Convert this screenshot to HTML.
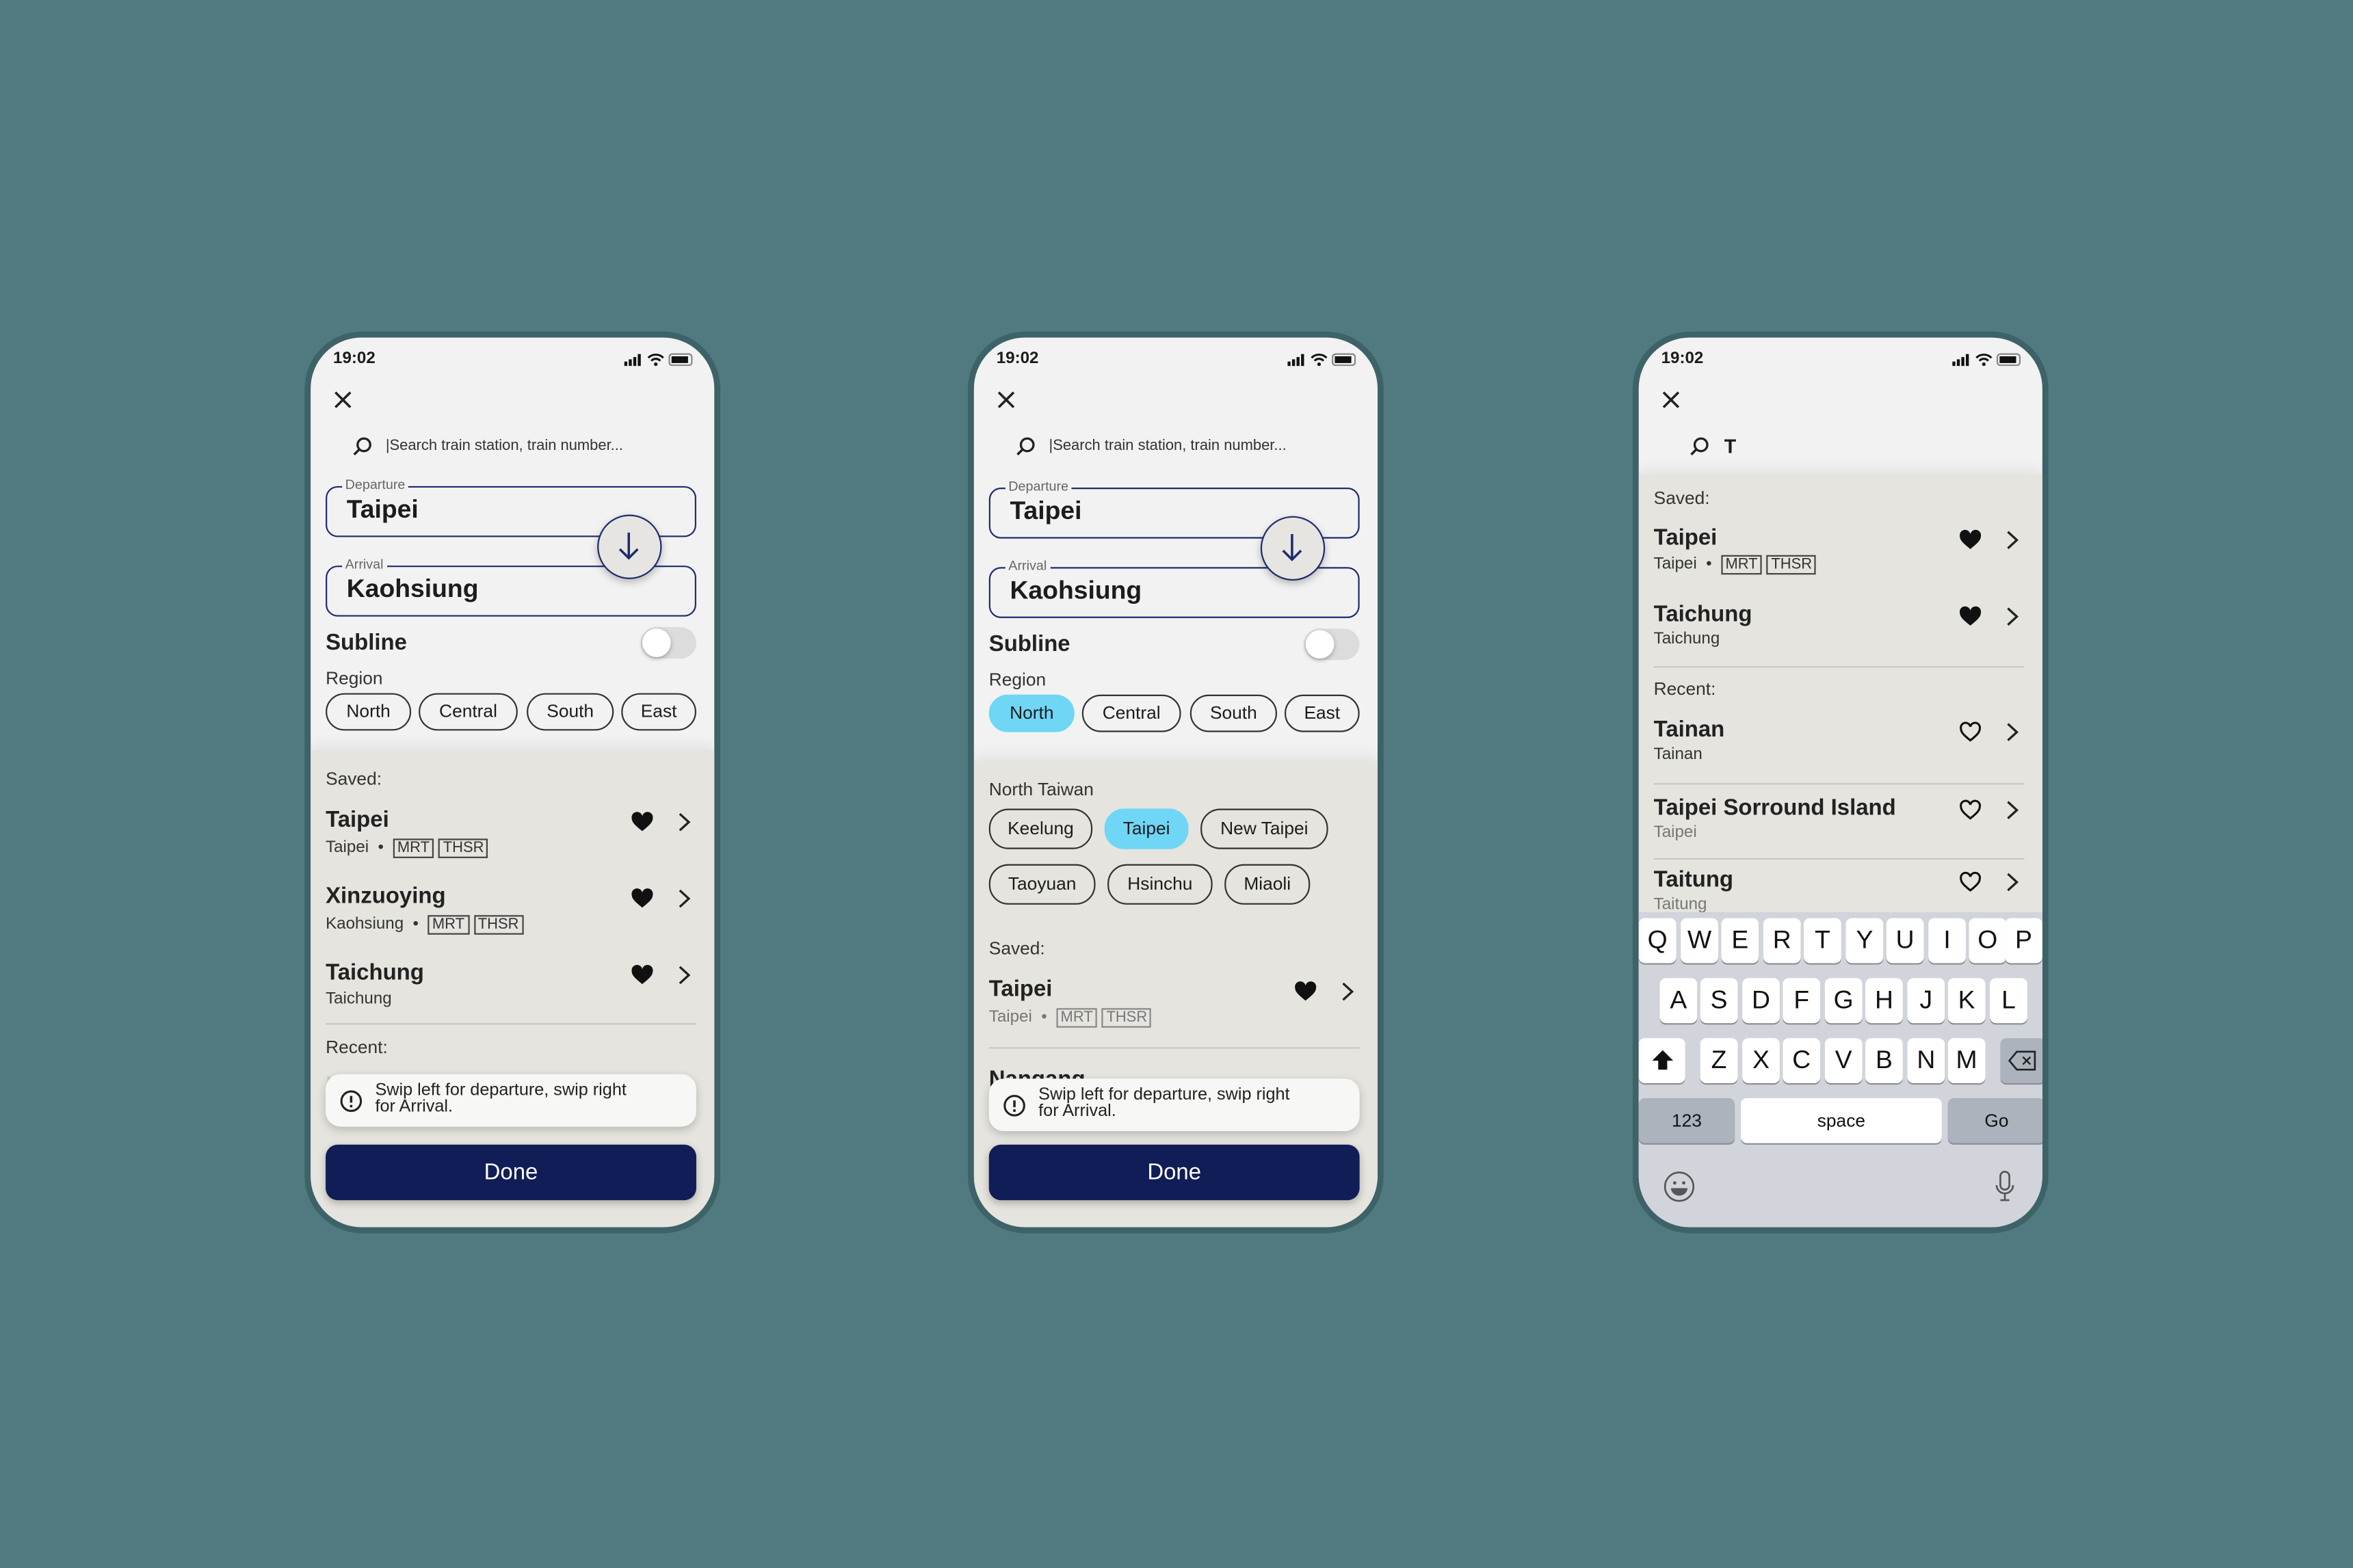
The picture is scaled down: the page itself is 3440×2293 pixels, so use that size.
<!DOCTYPE html>
<html><head><meta charset="utf-8">
<style>
*{box-sizing:border-box;margin:0;padding:0}
html,body{width:3440px;height:2292px;overflow:hidden;background:#507a7f}
#s{position:absolute;left:0;top:0;width:1568px;height:1045px;transform:scale(2.19388);transform-origin:0 0;font-family:"Liberation Sans",sans-serif;color:#1c1c1c}
.ph{position:absolute;width:277px;height:601px;border:4px solid #3d6267;border-radius:38px;background:#f2f2f2;overflow:hidden;top:221px}
.a{position:absolute}
.time{left:15px;top:8px;font-size:11px;font-weight:bold}
.stat{right:12px;top:10px}
.box{position:absolute;left:10px;width:247px;height:34px;border:1.5px solid #1e2c6e;border-radius:8px}
.lbl{position:absolute;left:10px;top:-7px;font-size:9px;color:#666;background:#f2f2f2;padding:0 2px;line-height:11px}
.big{position:absolute;left:13px;top:5px;font-size:17px;font-weight:bold}
.swap{position:absolute;left:191px;width:43px;height:43px;border-radius:50%;border:1.5px solid #1e2c6e;background:#e6e5e1;box-shadow:0 2px 5px rgba(0,0,0,.25)}
.chip{position:absolute;height:25px;border:1px solid #333;border-radius:13px;font-size:12px;line-height:23px;text-align:center}
.blue{background:#6fd6f6;border-color:#6fd6f6}
.sheet{position:absolute;left:0;right:0;bottom:0;background:#e5e4df;box-shadow:0 -4px 8px rgba(0,0,0,.06)}
.sm{font-size:12px;color:#333}
.nm{font-size:15px;font-weight:bold;color:#222}
.sub{font-size:11px;color:#333}
.sub.g{color:#777}
.tag{display:inline-block;border:1px solid #444;font-size:10px;line-height:11px;padding:0 2px;margin-left:3px}
.g .tag{border-color:#888}
.line{position:absolute;left:10px;width:247px;height:1px;background:#c9c8c3}
.toast{position:absolute;left:10px;width:247px;height:35px;background:#f7f7f5;border-radius:10px;box-shadow:0 2px 6px rgba(0,0,0,.2);font-size:11.5px;line-height:11px;padding:6px 0 0 59px;color:#222}
.toast svg{position:absolute;left:9px;top:10px}
.toast span{position:absolute;left:33px;top:6px}
.done{position:absolute;left:10px;width:247px;height:37px;background:#111d57;border-radius:8px;color:#fff;font-size:15px;text-align:center;line-height:37px;box-shadow:0 2px 5px rgba(0,0,0,.25)}
.kb{position:absolute;left:0;right:0;top:386px;bottom:0;background:#d1d4da}
.k{position:absolute;height:30px;width:25px;background:#fff;border-radius:4px;box-shadow:0 1px 0 #8a8d93;font-size:17px;text-align:center;line-height:30px;color:#111}
.kd{background:#adb3bc}
</style></head><body><div id="s">

<!-- PHONE 1 -->
<div class="ph" style="left:203px">
 <div class="a time">19:02</div>
 <svg class="a stat" width="48" height="9" viewBox="0 0 48 9"><rect x="0" y="6" width="2" height="3" fill="#111"/><rect x="3" y="4.5" width="2" height="4.5" fill="#111"/><rect x="6" y="3" width="2" height="6" fill="#111"/><rect x="9" y="1" width="2" height="8" fill="#111"/><path d="M16 3.5a7 7 0 0 1 10 0M18 5.5a4 4 0 0 1 6 0" stroke="#111" stroke-width="1.4" fill="none"/><circle cx="21" cy="7.8" r="1.2" fill="#111"/><rect x="30" y="1" width="15" height="7.5" rx="2" fill="none" stroke="#888"/><rect x="31.5" y="2.5" width="11" height="4.5" fill="#111"/></svg>
 <svg class="a" style="left:15px;top:35px" width="13" height="13"><path d="M1.5 1.5l10 10M11.5 1.5l-10 10" stroke="#222" stroke-width="1.6"/></svg>
 <svg class="a" style="left:28px;top:66px" width="13" height="13"><circle cx="7.5" cy="5.5" r="4.2" stroke="#222" stroke-width="1.5" fill="none"/><path d="M4.5 8.5L1 12" stroke="#222" stroke-width="1.6"/></svg>
 <div class="a" style="left:50px;top:67px;font-size:10px;color:#333">|Search train station, train number...</div>
 <div class="box" style="top:99px"><div class="lbl">Departure</div><div class="big">Taipei</div></div>
 <div class="box" style="top:152px"><div class="lbl">Arrival</div><div class="big">Kaohsiung</div></div>
 <div class="swap" style="top:118px"><svg width="40" height="40"><path d="M20 11v17M14 22l6 6 6-6" stroke="#1e2c6e" stroke-width="1.6" fill="none"/></svg></div>
 <div class="a nm" style="left:10px;top:195px">Subline</div>
 <div class="a" style="left:220px;top:193px;width:37px;height:21px;border-radius:11px;background:#dcdcdc"><div style="position:absolute;left:1px;top:1px;width:19px;height:19px;border-radius:50%;background:#fff;box-shadow:0 1px 3px rgba(0,0,0,.3)"></div></div>
 <div class="a sm" style="left:10px;top:220px">Region</div>
 <div class="chip" style="left:10px;top:237px;width:57px">North</div>
 <div class="chip" style="left:72px;top:237px;width:66px">Central</div>
 <div class="chip" style="left:144px;top:237px;width:58px">South</div>
 <div class="chip" style="left:207px;top:237px;width:50px">East</div>
 <div class="sheet" style="top:275px">
  <div class="a sm" style="left:10px;top:12px">Saved:</div>
  <div class="a nm" style="left:10px;top:38px">Taipei</div>
  <div class="a sub" style="left:10px;top:59px">Taipei &nbsp;• <span class="tag">MRT</span><span class="tag">THSR</span></div>
  <div class="a nm" style="left:10px;top:89px">Xinzuoying</div>
  <div class="a sub" style="left:10px;top:110px">Kaohsiung &nbsp;• <span class="tag">MRT</span><span class="tag">THSR</span></div>
  <div class="a nm" style="left:10px;top:140px">Taichung</div>
  <div class="a sub" style="left:10px;top:160px">Taichung</div>
  <svg class="a" style="left:213px;top:41px" width="16" height="14"><path d="M8 13C3 9 1 7 1 4.5A3.5 3.5 0 0 1 8 3a3.5 3.5 0 0 1 7 1.5C15 7 13 9 8 13z" fill="#111"/></svg>
  <svg class="a" style="left:213px;top:92px" width="16" height="14"><path d="M8 13C3 9 1 7 1 4.5A3.5 3.5 0 0 1 8 3a3.5 3.5 0 0 1 7 1.5C15 7 13 9 8 13z" fill="#111"/></svg>
  <svg class="a" style="left:213px;top:143px" width="16" height="14"><path d="M8 13C3 9 1 7 1 4.5A3.5 3.5 0 0 1 8 3a3.5 3.5 0 0 1 7 1.5C15 7 13 9 8 13z" fill="#111"/></svg>
  <svg class="a" style="left:244px;top:41px" width="10" height="14"><path d="M2 1.5l6 5.5-6 5.5" stroke="#222" stroke-width="1.5" fill="none"/></svg>
  <svg class="a" style="left:244px;top:92px" width="10" height="14"><path d="M2 1.5l6 5.5-6 5.5" stroke="#222" stroke-width="1.5" fill="none"/></svg>
  <svg class="a" style="left:244px;top:143px" width="10" height="14"><path d="M2 1.5l6 5.5-6 5.5" stroke="#222" stroke-width="1.5" fill="none"/></svg>
  <div class="line" style="top:182px"></div>
  <div class="a sm" style="left:10px;top:191px">Recent:</div>
  <div class="a nm" style="left:10px;top:215px;color:#ccc">Kaohsiung</div>
 </div>
 <div class="toast" style="top:491px"><svg width="16" height="16"><circle cx="8" cy="8" r="6.5" stroke="#222" stroke-width="1.4" fill="none"/><path d="M8 4.5v4.5" stroke="#222" stroke-width="1.6"/><circle cx="8" cy="11.3" r=".9" fill="#222"/></svg><span>Swip left for departure, swip right<br>for Arrival.</span></div>
 <div class="done" style="top:538px">Done</div>
</div>

<!-- PHONE 2 -->
<div class="ph" style="left:645px">
 <div class="a time">19:02</div>
 <svg class="a stat" width="48" height="9" viewBox="0 0 48 9"><rect x="0" y="6" width="2" height="3" fill="#111"/><rect x="3" y="4.5" width="2" height="4.5" fill="#111"/><rect x="6" y="3" width="2" height="6" fill="#111"/><rect x="9" y="1" width="2" height="8" fill="#111"/><path d="M16 3.5a7 7 0 0 1 10 0M18 5.5a4 4 0 0 1 6 0" stroke="#111" stroke-width="1.4" fill="none"/><circle cx="21" cy="7.8" r="1.2" fill="#111"/><rect x="30" y="1" width="15" height="7.5" rx="2" fill="none" stroke="#888"/><rect x="31.5" y="2.5" width="11" height="4.5" fill="#111"/></svg>
 <svg class="a" style="left:15px;top:35px" width="13" height="13"><path d="M1.5 1.5l10 10M11.5 1.5l-10 10" stroke="#222" stroke-width="1.6"/></svg>
 <svg class="a" style="left:28px;top:66px" width="13" height="13"><circle cx="7.5" cy="5.5" r="4.2" stroke="#222" stroke-width="1.5" fill="none"/><path d="M4.5 8.5L1 12" stroke="#222" stroke-width="1.6"/></svg>
 <div class="a" style="left:50px;top:67px;font-size:10px;color:#333">|Search train station, train number...</div>
 <div class="box" style="top:100px"><div class="lbl">Departure</div><div class="big">Taipei</div></div>
 <div class="box" style="top:153px"><div class="lbl">Arrival</div><div class="big">Kaohsiung</div></div>
 <div class="swap" style="top:119px"><svg width="40" height="40"><path d="M20 11v17M14 22l6 6 6-6" stroke="#1e2c6e" stroke-width="1.6" fill="none"/></svg></div>
 <div class="a nm" style="left:10px;top:196px">Subline</div>
 <div class="a" style="left:220px;top:194px;width:37px;height:21px;border-radius:11px;background:#dcdcdc"><div style="position:absolute;left:1px;top:1px;width:19px;height:19px;border-radius:50%;background:#fff;box-shadow:0 1px 3px rgba(0,0,0,.3)"></div></div>
 <div class="a sm" style="left:10px;top:221px">Region</div>
 <div class="chip blue" style="left:10px;top:238px;width:57px">North</div>
 <div class="chip" style="left:72px;top:238px;width:66px">Central</div>
 <div class="chip" style="left:144px;top:238px;width:58px">South</div>
 <div class="chip" style="left:207px;top:238px;width:50px">East</div>
 <div class="sheet" style="top:282px">
  <div class="a sm" style="left:10px;top:12px">North Taiwan</div>
  <div class="chip" style="left:10px;top:32px;width:69px;height:27px;line-height:25px">Keelung</div>
  <div class="chip blue" style="left:87px;top:32px;width:56px;height:27px;line-height:25px">Taipei</div>
  <div class="chip" style="left:151px;top:32px;width:85px;height:27px;line-height:25px">New Taipei</div>
  <div class="chip" style="left:10px;top:69px;width:71px;height:27px;line-height:25px">Taoyuan</div>
  <div class="chip" style="left:89px;top:69px;width:70px;height:27px;line-height:25px">Hsinchu</div>
  <div class="chip" style="left:167px;top:69px;width:57px;height:27px;line-height:25px">Miaoli</div>
  <div class="a sm" style="left:10px;top:118px">Saved:</div>
  <div class="a nm" style="left:10px;top:144px">Taipei</div>
  <div class="a sub g" style="left:10px;top:165px">Taipei &nbsp;• <span class="tag">MRT</span><span class="tag">THSR</span></div>
  <svg class="a" style="left:213px;top:147px" width="16" height="14"><path d="M8 13C3 9 1 7 1 4.5A3.5 3.5 0 0 1 8 3a3.5 3.5 0 0 1 7 1.5C15 7 13 9 8 13z" fill="#111"/></svg>
  <svg class="a" style="left:244px;top:147px" width="10" height="14"><path d="M2 1.5l6 5.5-6 5.5" stroke="#222" stroke-width="1.5" fill="none"/></svg>
  <div class="line" style="top:191px"></div>
  <div class="a nm" style="left:10px;top:204px">Nangang</div>
 </div>
 <div class="toast" style="top:494px"><svg width="16" height="16"><circle cx="8" cy="8" r="6.5" stroke="#222" stroke-width="1.4" fill="none"/><path d="M8 4.5v4.5" stroke="#222" stroke-width="1.6"/><circle cx="8" cy="11.3" r=".9" fill="#222"/></svg><span>Swip left for departure, swip right<br>for Arrival.</span></div>
 <div class="done" style="top:538px">Done</div>
</div>

<!-- PHONE 3 -->
<div class="ph" style="left:1088px">
 <div class="a time">19:02</div>
 <svg class="a stat" width="48" height="9" viewBox="0 0 48 9"><rect x="0" y="6" width="2" height="3" fill="#111"/><rect x="3" y="4.5" width="2" height="4.5" fill="#111"/><rect x="6" y="3" width="2" height="6" fill="#111"/><rect x="9" y="1" width="2" height="8" fill="#111"/><path d="M16 3.5a7 7 0 0 1 10 0M18 5.5a4 4 0 0 1 6 0" stroke="#111" stroke-width="1.4" fill="none"/><circle cx="21" cy="7.8" r="1.2" fill="#111"/><rect x="30" y="1" width="15" height="7.5" rx="2" fill="none" stroke="#888"/><rect x="31.5" y="2.5" width="11" height="4.5" fill="#111"/></svg>
 <svg class="a" style="left:15px;top:35px" width="13" height="13"><path d="M1.5 1.5l10 10M11.5 1.5l-10 10" stroke="#222" stroke-width="1.6"/></svg>
 <svg class="a" style="left:34px;top:66px" width="13" height="13"><circle cx="7.5" cy="5.5" r="4.2" stroke="#222" stroke-width="1.5" fill="none"/><path d="M4.5 8.5L1 12" stroke="#222" stroke-width="1.6"/></svg>
 <div class="a" style="left:57px;top:65px;font-size:13px;font-weight:bold">T</div>
 <div class="sheet" style="top:91px">
  <div class="a sm" style="left:10px;top:9px">Saved:</div>
  <div class="a nm" style="left:10px;top:34px">Taipei</div>
  <div class="a sub" style="left:10px;top:54px">Taipei &nbsp;• <span class="tag">MRT</span><span class="tag">THSR</span></div>
  <div class="a nm" style="left:10px;top:85px">Taichung</div>
  <div class="a sub" style="left:10px;top:104px">Taichung</div>
  <div class="line" style="top:128px"></div>
  <div class="a sm" style="left:10px;top:136px">Recent:</div>
  <div class="a nm" style="left:10px;top:162px">Tainan</div>
  <div class="a sub" style="left:10px;top:181px">Tainan</div>
  <div class="line" style="top:206px"></div>
  <div class="a nm" style="left:10px;top:214px">Taipei Sorround Island</div>
  <div class="a sub g" style="left:10px;top:233px">Taipei</div>
  <div class="line" style="top:256px"></div>
  <div class="a nm" style="left:10px;top:262px">Taitung</div>
  <div class="a sub g" style="left:10px;top:281px">Taitung</div>
  <svg class="a" style="left:213px;top:37px" width="16" height="14"><path d="M8 13C3 9 1 7 1 4.5A3.5 3.5 0 0 1 8 3a3.5 3.5 0 0 1 7 1.5C15 7 13 9 8 13z" fill="#111"/></svg>
  <svg class="a" style="left:213px;top:88px" width="16" height="14"><path d="M8 13C3 9 1 7 1 4.5A3.5 3.5 0 0 1 8 3a3.5 3.5 0 0 1 7 1.5C15 7 13 9 8 13z" fill="#111"/></svg>
  <svg class="a" style="left:213px;top:165px" width="16" height="14"><path d="M8 12.5C3.3 8.8 1.7 6.9 1.7 4.6A3.1 3.1 0 0 1 8 3.4a3.1 3.1 0 0 1 6.3 1.2C14.3 6.9 12.7 8.8 8 12.5z" fill="none" stroke="#111" stroke-width="1.4"/></svg>
  <svg class="a" style="left:213px;top:217px" width="16" height="14"><path d="M8 12.5C3.3 8.8 1.7 6.9 1.7 4.6A3.1 3.1 0 0 1 8 3.4a3.1 3.1 0 0 1 6.3 1.2C14.3 6.9 12.7 8.8 8 12.5z" fill="none" stroke="#111" stroke-width="1.4"/></svg>
  <svg class="a" style="left:213px;top:265px" width="16" height="14"><path d="M8 12.5C3.3 8.8 1.7 6.9 1.7 4.6A3.1 3.1 0 0 1 8 3.4a3.1 3.1 0 0 1 6.3 1.2C14.3 6.9 12.7 8.8 8 12.5z" fill="none" stroke="#111" stroke-width="1.4"/></svg>
  <svg class="a" style="left:244px;top:37px" width="10" height="14"><path d="M2 1.5l6 5.5-6 5.5" stroke="#222" stroke-width="1.5" fill="none"/></svg>
  <svg class="a" style="left:244px;top:88px" width="10" height="14"><path d="M2 1.5l6 5.5-6 5.5" stroke="#222" stroke-width="1.5" fill="none"/></svg>
  <svg class="a" style="left:244px;top:165px" width="10" height="14"><path d="M2 1.5l6 5.5-6 5.5" stroke="#222" stroke-width="1.5" fill="none"/></svg>
  <svg class="a" style="left:244px;top:217px" width="10" height="14"><path d="M2 1.5l6 5.5-6 5.5" stroke="#222" stroke-width="1.5" fill="none"/></svg>
  <svg class="a" style="left:244px;top:265px" width="10" height="14"><path d="M2 1.5l6 5.5-6 5.5" stroke="#222" stroke-width="1.5" fill="none"/></svg>
 </div>
 <div class="kb" style="top:383px">
  <div class="k" style="left:0px;top:4px">Q</div><div class="k" style="left:28px;top:4px">W</div><div class="k" style="left:55px;top:4px">E</div><div class="k" style="left:83px;top:4px">R</div><div class="k" style="left:110px;top:4px">T</div><div class="k" style="left:138px;top:4px">Y</div><div class="k" style="left:165px;top:4px">U</div><div class="k" style="left:193px;top:4px">I</div><div class="k" style="left:220px;top:4px">O</div><div class="k" style="left:244px;top:4px">P</div>
  <div class="k" style="left:14px;top:44px">A</div><div class="k" style="left:41px;top:44px">S</div><div class="k" style="left:69px;top:44px">D</div><div class="k" style="left:96px;top:44px">F</div><div class="k" style="left:124px;top:44px">G</div><div class="k" style="left:151px;top:44px">H</div><div class="k" style="left:179px;top:44px">J</div><div class="k" style="left:206px;top:44px">K</div><div class="k" style="left:234px;top:44px">L</div>
  <div class="k" style="left:0px;top:84px;width:31px"><svg width="16" height="16" style="margin-top:7px"><path d="M8 1L1 8h4v6h6V8h4z" fill="#111"/></svg></div>
  <div class="k" style="left:41px;top:84px">Z</div><div class="k" style="left:69px;top:84px">X</div><div class="k" style="left:96px;top:84px">C</div><div class="k" style="left:124px;top:84px">V</div><div class="k" style="left:151px;top:84px">B</div><div class="k" style="left:179px;top:84px">N</div><div class="k" style="left:206px;top:84px">M</div>
  <div class="k kd" style="left:241px;top:84px;width:30px"><svg width="20" height="14" style="margin-top:8px"><path d="M6 1h12v12H6L1 7z" fill="none" stroke="#222" stroke-width="1.2"/><path d="M10 4.5l5 5M15 4.5l-5 5" stroke="#222" stroke-width="1.1"/></svg></div>
  <div class="k kd" style="left:0px;top:124px;width:64px;font-size:12px">123</div>
  <div class="k" style="left:68px;top:124px;width:134px;font-size:12px">space</div>
  <div class="k kd" style="left:206px;top:124px;width:65px;font-size:12px">Go</div>
  <svg class="a" style="left:16px;top:172px" width="22" height="22"><circle cx="11" cy="11" r="9.5" fill="none" stroke="#555" stroke-width="1.2"/><circle cx="8" cy="8.5" r="1.1" fill="#555"/><circle cx="14" cy="8.5" r="1.1" fill="#555"/><path d="M5.5 12h11a5.5 5 0 0 1-11 0z" fill="#555"/></svg>
  <svg class="a" style="left:237px;top:172px" width="14" height="22"><rect x="4" y="1" width="6" height="12" rx="3" fill="none" stroke="#555" stroke-width="1.2"/><path d="M1.5 10a5.5 5.5 0 0 0 11 0M7 15.5v4M4 20h6" stroke="#555" stroke-width="1.2" fill="none"/></svg>
 </div>
</div>

</div></body></html>
